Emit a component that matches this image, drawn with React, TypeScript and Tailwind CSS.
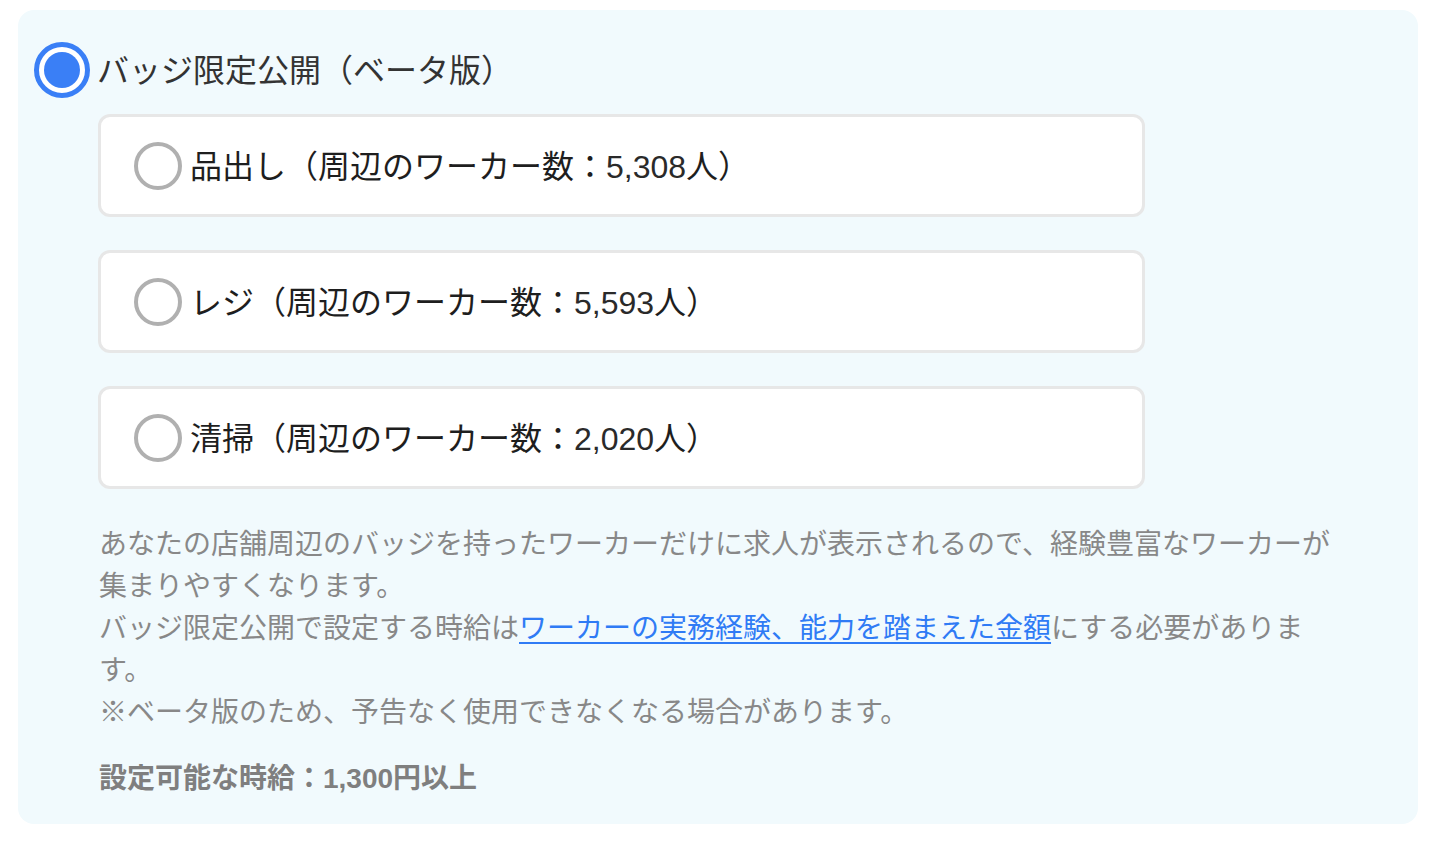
import React from "react";

const FONT = {
  fontFamily:
    '"Liberation Sans", "Noto Sans CJK JP", sans-serif',
};

function Option({ label, count }: { label: string; count: string }) {
  return (
    <div className="flex h-[103px] w-[1047px] items-center rounded-[12px] border-[3px] border-[#e7e7e7] bg-white pl-[33px]">
      <div className="h-[48px] w-[48px] shrink-0 rounded-full border-[4px] border-[#b0b0b0] bg-white" />
      <span className="ml-[8px] pt-[2px] text-[32px] leading-none text-[#1e1e1e]">
        {label}（周辺のワーカー数：<span className="text-[#2a2a2a]">{count}</span>人）
      </span>
    </div>
  );
}

export default function App() {
  return (
    <div className="min-h-[842px] bg-white px-[18px] pt-[10px]" style={FONT}>
      <div className="flex w-[1400px] flex-col rounded-[16px] bg-[#f1fafd] pb-[24px] pl-[16px] pr-[81px] pt-[32px]">
        <div className="flex items-center">
          <div className="flex h-[56px] w-[56px] shrink-0 items-center justify-center rounded-full border-[5px] border-[#3a7ff6] bg-white">
            <div className="h-[36px] w-[36px] rounded-full bg-[#3a7ff6]" />
          </div>
          <span className="ml-[7px] pt-[2px] text-[32px] leading-none text-[#333333]">
            バッジ限定公開（ベータ版）
          </span>
        </div>
        <div className="ml-[64px] mt-[16px] flex flex-col gap-[33px]">
          <Option label="品出し" count="5,308" />
          <Option label="レジ" count="5,593" />
          <Option label="清掃" count="2,020" />
        </div>
        <div className="ml-[65px] mt-[35px] text-[28px] leading-[42px] text-[#888888]">
          <p>
            あなたの店舗周辺のバッジを持ったワーカーだけに求人が表示されるので、経験豊富なワーカーが集まりやすくなります。
          </p>
          <p>
            バッジ限定公開で設定する時給は
            <a href="#" className="text-[#2f7bf5] underline underline-offset-[4px]">
              ワーカーの実務経験、能力を踏まえた金額
            </a>
            にする必要があります。
          </p>
          <p>※ベータ版のため、予告なく使用できなくなる場合があります。</p>
          <p className="mt-[24px] font-bold text-[#7f7f7f]">設定可能な時給：1,300円以上</p>
        </div>
      </div>
    </div>
  );
}
